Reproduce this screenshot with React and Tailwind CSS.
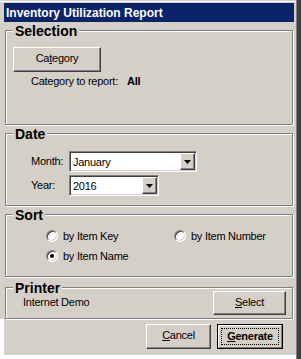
import React from "react";

const Btn = ({ children, className = "" }) => (
  <div
    className={`flex items-center justify-center border border-t-white border-l-white border-r-[#404040] border-b-[#404040] shadow-[inset_-1px_-1px_0_#808080] pb-[2px] ${className}`}
  >
    {children}
  </div>
);

const Group = ({ title, className = "", children }) => (
  <div
    className={`ml-[5px] w-[288px] border border-[#808080] shadow-[inset_1px_1px_0_#fff,1px_1px_0_#fff] ${className}`}
  >
    <div className="-mt-[7px] ml-[7px] w-fit bg-[#d4d0c8] px-[2px] text-[14px] font-bold leading-[14px] tracking-normal">
      {title}
    </div>
    {children}
  </div>
);

const Combo = ({ className = "", children }) => (
  <div
    className={`flex h-[21px] border border-t-[#808080] border-l-[#808080] border-r-white border-b-white bg-white p-[1px] shadow-[inset_1px_1px_0_#404040,inset_-1px_-1px_0_#d4d0c8] ${className}`}
  >
    <span className="flex-1 pl-[2px] pt-[1px] leading-[16px]">{children}</span>
    <div className="flex w-[15px] items-center justify-center border border-t-white border-l-white border-r-[#404040] border-b-[#404040] bg-[#d4d0c8] shadow-[inset_-1px_-1px_0_#808080]">
      <svg width="7" height="4" viewBox="0 0 7 4">
        <path d="M0 0h7L3.5 4z" fill="#000" />
      </svg>
    </div>
  </div>
);

const Radio = ({ label, checked }) => (
  <div className="flex h-[16px] items-center">
    <div className="flex h-[12px] w-[12px] items-center justify-center rounded-full border border-t-[#808080] border-l-[#808080] border-r-white border-b-white bg-white shadow-[inset_1px_1px_0_#404040,inset_-1px_-1px_0_#d4d0c8]">
      {checked && <div className="h-[4px] w-[4px] rounded-full bg-black" />}
    </div>
    <span className="ml-[5px]">{label}</span>
  </div>
);

export default function App() {
  return (
    <div className="flex h-[359px] w-[301px] bg-white font-['Liberation_Sans',Arial,sans-serif] text-[11px] leading-[13px] tracking-[-0.25px] text-black">
      <div className="flex h-[355px] w-[296px] flex-col bg-[#d4d0c8]">
        <div className="mt-[1px] h-[1px] bg-white" />
        <div className="h-[1px]" />

        {/* title bar */}
        <div className="ml-[4px] h-[19px] w-[290px] bg-[#0a246a] pl-[2px] pt-[1px] text-[12px] font-bold leading-[18px] tracking-normal text-white">
          Inventory Utilization Report
        </div>

        <Group title="Selection" className="mt-[8px] h-[95px]">
          <Btn className="ml-[7px] mt-[9px] h-[25px] w-[88px]">
            <span>
              Ca<span className="underline">t</span>egory
            </span>
          </Btn>
          <div className="ml-[25px] mt-[3px] flex">
            <span className="w-[96px]">Category to report:</span>
            <span className="font-bold">All</span>
          </div>
        </Group>

        <Group title="Date" className="mt-[8px] h-[73px]">
          <div className="ml-[25px] mt-[10px] flex h-[21px] items-center">
            <span className="w-[38px]">Month:</span>
            <Combo className="w-[128px]">January</Combo>
          </div>
          <div className="ml-[25px] mt-[3px] flex h-[21px] items-center">
            <span className="w-[38px]">Year:</span>
            <Combo className="w-[90px]">2016</Combo>
          </div>
        </Group>

        <Group title="Sort" className="mt-[8px] h-[63px]">
          <div className="ml-[40px] mt-[6px] grid grid-cols-[128px_auto] gap-y-[4px]">
            <Radio label="by Item Key" />
            <Radio label="by Item Number" />
            <Radio label="by Item Name" checked />
          </div>
        </Group>

        <Group title="Printer" className="mt-[10px] h-[32px]">
          <div className="-mt-[4px] flex h-[24px] justify-between">
            <span className="ml-[17px] mt-[5px]">Internet Demo</span>
            <Btn className="mr-[6px] h-[24px] w-[73px]">
              <span>
                <span className="underline">S</span>elect
              </span>
            </Btn>
          </div>
        </Group>

        {/* bottom buttons */}
        <div className="flex flex-1 justify-end gap-[6px] border-l-[4px] border-white pr-[13px] pt-[5px]">
          <Btn className="h-[25px] w-[65px]">
            <span>
              <span className="underline">C</span>ancel
            </span>
          </Btn>
          <div className="h-[25px] w-[66px] border border-black">
            <div className="h-full w-full border border-t-white border-l-white border-r-[#808080] border-b-[#808080] p-[2px]">
              <div className="flex h-full w-full items-center justify-center border border-dotted border-black pb-[1px] font-bold">
                <span>
                  <span className="underline">G</span>enerate
                </span>
              </div>
            </div>
          </div>
        </div>
      </div>
      <div className="h-full w-[1px] bg-[#808080]" />
      <div className="h-full w-[4px] bg-[#404040]" />
    </div>
  );
}
